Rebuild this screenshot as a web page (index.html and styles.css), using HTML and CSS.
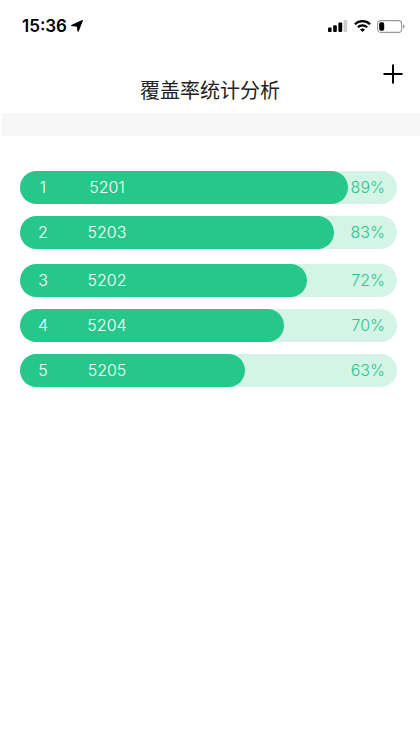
FILE: index.html
```html
<!DOCTYPE html>
<html lang="zh-CN">
<head>
<meta charset="utf-8">
<meta name="viewport" content="width=device-width, initial-scale=1">
<title>覆盖率统计分析</title>
<link rel="stylesheet" href="styles.css">
</head>
<body>
<div class="status">
  <div class="status-time">
    <span>15:36</span>
    <svg width="12" height="12" viewBox="0 0 12 12" aria-hidden="true"><path d="M11.4.6 7.1 11.2 6.3 6.3.6 5.5Z" fill="#000" stroke="#000" stroke-width="1.1" stroke-linejoin="round"/></svg>
  </div>
  <div class="status-icons">
    <svg width="20" height="12" viewBox="0 0 20 12" aria-hidden="true"><rect x="0" y="7.4" width="3.6" height="4.6" rx="1"/><rect x="5.2" y="5.2" width="3.6" height="6.8" rx="1"/><rect x="10.4" y="2.6" width="3.8" height="9.4" rx="1"/><rect x="15.6" y="0" width="3.6" height="12" rx="1" fill="#ccc"/></svg>
    <svg width="17" height="12" viewBox="0 0 17 12" fill="none" stroke="#000" stroke-width="2.2" aria-hidden="true"><path d="M.9 4.3a10.8 10.8 0 0 1 15.2 0M3.8 7.3a6.7 6.7 0 0 1 9.4 0"/><path d="M8.5 12 6 9.6a3.6 3.6 0 0 1 5 0Z" fill="#000" stroke="none"/></svg>
    <svg width="28" height="13" viewBox="0 0 28 13" aria-hidden="true"><rect x=".6" y=".6" width="24" height="11.8" rx="3.2" fill="none" stroke="#999" stroke-width="1.1"/><rect x="2.2" y="2.2" width="5" height="8.6" rx="1.8"/><path d="M26 4.5c2 .6 2 3.4 0 4Z" fill="#999"/></svg>
  </div>
</div>
<header class="header">
  <h1 class="title">覆盖率统计分析</h1>
  <button class="add" type="button" aria-label="添加">
    <svg width="20" height="20" viewBox="0 0 20 20" aria-hidden="true"><path d="M10 .5v19M.5 10h19" stroke="#000" stroke-width="2"/></svg>
  </button>
</header>
<div class="divider"></div>
<main class="chart">
  <ol class="group">
    <li class="row"><div class="fill" style="width:87.1%"></div><span class="rank">1</span><span class="code">5201</span><span class="rate">89%</span></li>
    <li class="row"><div class="fill" style="width:83.4%"></div><span class="rank">2</span><span class="code">5203</span><span class="rate">83%</span></li>
  </ol>
  <ol class="group">
    <li class="row"><div class="fill" style="width:76%"></div><span class="rank">3</span><span class="code">5202</span><span class="rate">72%</span></li>
    <li class="row"><div class="fill" style="width:70.1%"></div><span class="rank">4</span><span class="code">5204</span><span class="rate">70%</span></li>
    <li class="row"><div class="fill" style="width:59.8%"></div><span class="rank">5</span><span class="code">5205</span><span class="rate">63%</span></li>
  </ol>
</main>
</body>
</html>
```
FILE: styles.css
```css
* { box-sizing: border-box; }

body {
  margin: 0;
  background: #fff;
  color: #222;
  font-family: Inter, "Noto Sans CJK SC", sans-serif;
}

.status {
  display: flex;
  justify-content: space-between;
  align-items: center;
  height: 52px;
  padding: 0 15px 0 22px;
  color: #000;
}

.status-time,
.status-icons {
  display: flex;
  align-items: center;
}

.status-time {
  gap: 4px;
  font-size: 17px;
  font-weight: 600;
}

.status-icons { gap: 6px; }

.header {
  display: grid;
  grid-template-columns: 1fr auto 1fr;
  height: 61px;
  padding: 0 17px;
}

.title {
  grid-column: 2;
  margin: 23px 0 0;
  font-family: "Noto Sans CJK SC", sans-serif;
  font-size: 20px;
  font-weight: 400;
  line-height: 30px;
}

.add {
  justify-self: end;
  align-self: start;
  margin-top: 12px;
  padding: 0;
  border: 0;
  background: none;
}

.add svg { display: block; }

.divider {
  height: 23px;
  margin-left: 2px;
  background: #f7f7f7;
}

.chart {
  display: grid;
  gap: 15px;
  padding: 35px 23px 35px 20px;
}

.group {
  display: grid;
  gap: 12px;
  margin: 0;
  padding: 0;
  list-style: none;
}

.row {
  position: relative;
  display: grid;
  grid-template-columns: 46px 82px 1fr;
  align-items: center;
  height: 33px;
  padding-right: 12px;
  border-radius: 17px;
  background: #d4f4e7;
  font-size: 16px;
  font-weight: 300;
  line-height: 33px;
  text-align: center;
}

.fill {
  position: absolute;
  inset: 0 auto 0 0;
  border-radius: 17px;
  background: #25c78b;
}

.rank,
.code {
  position: relative;
  color: #fff;
}

.rate {
  position: relative;
  color: #25c78b;
  text-align: right;
}
```
